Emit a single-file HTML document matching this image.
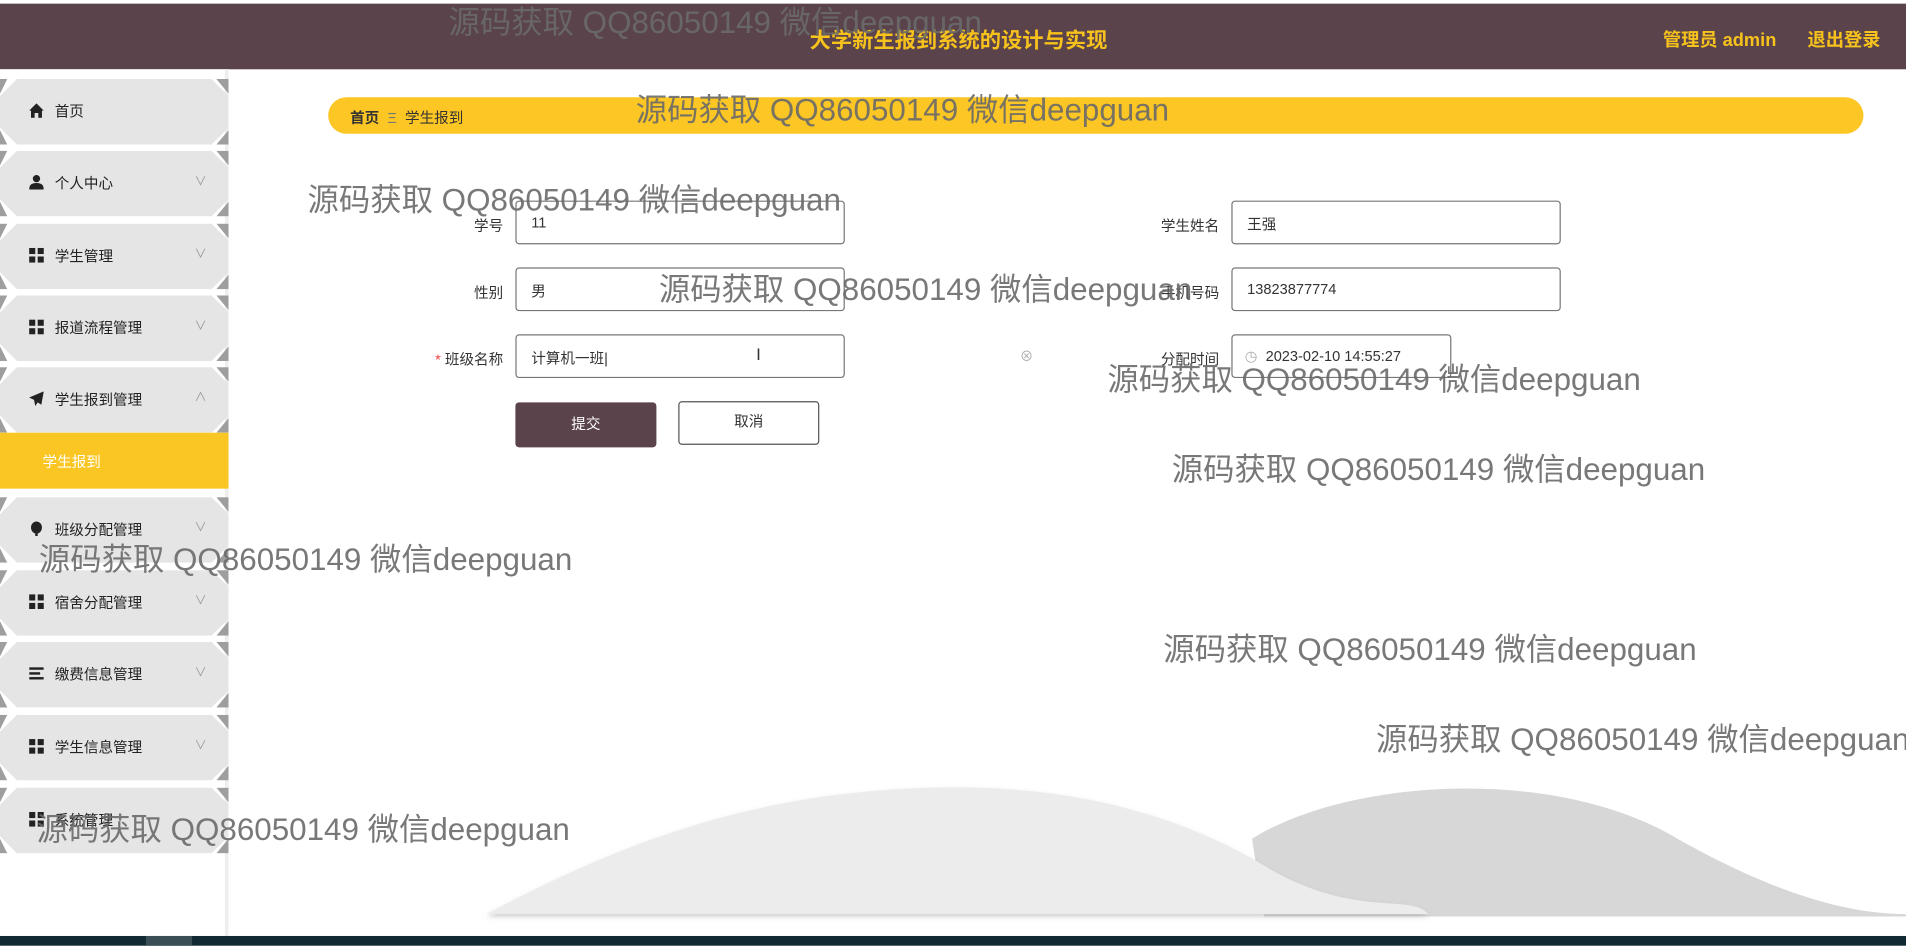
<!DOCTYPE html>
<html><head><meta charset="utf-8"><style>
*{margin:0;padding:0;box-sizing:border-box}
html,body{width:1906px;height:946px;overflow:hidden;background:#fff;font-family:"Liberation Sans","Noto Sans CJK SC",sans-serif}
#w{position:absolute;left:0;top:0;width:1568px;height:778px;transform:scale(1.21556);transform-origin:0 0;background:#fff}
.a{position:absolute}
.hdr{left:0;top:3px;width:1568px;height:54px;background:#5a434b}
.yt{color:#f7c21c;font-weight:bold;font-size:15px}
.side{left:0;top:57px;width:188px;height:713px;background:#fff;border-right:3px solid #eee}
.it{position:absolute;left:0;width:188px;height:54px}
.it .bg{position:absolute;inset:0;background:#9e9e9e;clip-path:polygon(0 0,6px 0,0 12px,0 42px,6px 54px,0 54px, 0 0)}
.it .bg2{position:absolute;inset:0;background:#9e9e9e;clip-path:polygon(178px 0,188px 0,188px 54px,178px 54px,188px 42px,188px 12px)}
.it .hx{position:absolute;inset:0;background:#e5e5e5;clip-path:polygon(14px 0,174px 0,188px 14px,188px 40px,174px 54px,14px 54px,0 40px,0 14px)}
.it .tx{position:absolute;left:45px;top:18px;font-size:12px;color:#222}
.it .ic{position:absolute;left:24px;top:20px;width:12px;height:12px}
.it .cv{position:absolute;left:160px;top:16px;font-size:10px;color:#999}
.wm{position:absolute;font-size:25.8px;color:#6a6a6a;white-space:nowrap;line-height:1;font-family:"Liberation Sans","Noto Sans CJK SC",sans-serif;opacity:.9}
.lb{position:absolute;font-size:12px;color:#333;text-align:right;width:100px}
.in{position:absolute;width:271px;height:36px;border:1.5px solid #777;border-radius:3px;background:#fff;font-size:12px;color:#333;padding:10px 0 0 12px}
.gi{display:grid;grid-template-columns:5px 5px;gap:2px;grid-auto-rows:5px}
.gi i{background:#222;display:block}
</style></head><body><div id="w">
<div class="a hdr"></div>
<div class="a yt" style="left:666px;top:20px;font-size:17.5px">大学新生报到系统的设计与实现</div>
<div class="a yt" style="left:1368px;top:22px">管理员 admin</div>
<div class="a yt" style="left:1487px;top:22px">退出登录</div>

<div class="a side"></div>
<div class="it" style="top:65px"><div class="bg"></div><div class="bg2"></div><div class="hx"></div>
<svg class="ic" viewBox="0 0 12 12"><path d="M6 0L0 6h1.5v6h3V8h3v4h3V6H12z" fill="#222"/></svg><div class="tx">首页</div></div>
<div class="it" style="top:124px"><div class="bg"></div><div class="bg2"></div><div class="hx"></div>
<svg class="ic" viewBox="0 0 12 12"><circle cx="6" cy="3" r="3" fill="#222"/><path d="M0 12c0-4 2-5.5 6-5.5s6 1.5 6 5.5z" fill="#222"/></svg><div class="tx">个人中心</div><div class="cv">∨</div></div>
<div class="it" style="top:184px"><div class="bg"></div><div class="bg2"></div><div class="hx"></div>
<div class="ic gi"><i></i><i></i><i></i><i></i></div><div class="tx">学生管理</div><div class="cv">∨</div></div>
<div class="it" style="top:243px"><div class="bg"></div><div class="bg2"></div><div class="hx"></div>
<div class="ic gi"><i></i><i></i><i></i><i></i></div><div class="tx">报道流程管理</div><div class="cv">∨</div></div>
<div class="it" style="top:302px"><div class="bg"></div><div class="bg2"></div><div class="hx"></div>
<svg class="ic" viewBox="0 0 12 12"><path d="M12 0L0 5l4 2 1 5 2-3 3 2z" fill="#222"/></svg><div class="tx">学生报到管理</div><div class="cv">∧</div></div>
<div class="a" style="left:0;top:356px;width:188px;height:46px;background:#f9c623"></div>
<div class="a" style="left:35px;top:371px;font-size:12px;color:#fff">学生报到</div>
<div class="it" style="top:409px"><div class="bg"></div><div class="bg2"></div><div class="hx"></div>
<svg class="ic" viewBox="0 0 12 12"><ellipse cx="6" cy="5" rx="4.5" ry="5" fill="#222"/><rect x="5" y="9" width="2" height="3" fill="#222"/></svg><div class="tx">班级分配管理</div><div class="cv">∨</div></div>
<div class="it" style="top:469px"><div class="bg"></div><div class="bg2"></div><div class="hx"></div>
<div class="ic gi"><i></i><i></i><i></i><i></i></div><div class="tx">宿舍分配管理</div><div class="cv">∨</div></div>
<div class="it" style="top:528px"><div class="bg"></div><div class="bg2"></div><div class="hx"></div>
<svg class="ic" viewBox="0 0 12 12"><rect y="1" width="12" height="2" fill="#222"/><rect y="5" width="9" height="2" fill="#222"/><rect y="9" width="12" height="2" fill="#222"/></svg><div class="tx">缴费信息管理</div><div class="cv">∨</div></div>
<div class="it" style="top:588px"><div class="bg"></div><div class="bg2"></div><div class="hx"></div>
<div class="ic gi"><i></i><i></i><i></i><i></i></div><div class="tx">学生信息管理</div><div class="cv">∨</div></div>
<div class="it" style="top:648px"><div class="bg"></div><div class="bg2"></div><div class="hx"></div>
<div class="ic gi"><i></i><i></i><i></i><i></i></div><div class="tx">系统管理</div></div>

<div class="a" style="left:270px;top:80px;width:1263px;height:30px;background:#fcc624;border-radius:15px"></div>
<div class="a" style="left:288px;top:88px;font-size:12px;color:#333"><b>首页</b>&nbsp;&nbsp;<span style="color:#777">Ξ</span>&nbsp;&nbsp;学生报到</div>

<div class="lb" style="left:314px;top:177px">学号</div>
<div class="in" style="left:424px;top:165px">11</div>
<div class="lb" style="left:314px;top:232px">性别</div>
<div class="in" style="left:424px;top:220px">男</div>
<div class="lb" style="left:314px;top:287px"><span style="color:#e44">*</span> 班级名称</div>
<div class="in" style="left:424px;top:275px">计算机一班|</div>
<div class="a" style="left:622px;top:283px;font-size:14px;color:#333">I</div>
<div class="a" style="left:839px;top:285px;font-size:11px;color:#aaa">⊗</div>
<div class="lb" style="left:903px;top:177px">学生姓名</div>
<div class="in" style="left:1013px;top:165px">王强</div>
<div class="lb" style="left:903px;top:232px">手机号码</div>
<div class="in" style="left:1013px;top:220px">13823877774</div>
<div class="lb" style="left:903px;top:287px">分配时间</div>
<div class="in" style="left:1013px;top:275px;width:181px;padding-left:10px"><span style="color:#aaa">◷</span>&nbsp; 2023-02-10 14:55:27</div>
<div class="a" style="left:424px;top:331px;width:116px;height:37px;background:#5a434b;border-radius:3px;color:#fff;font-size:12px;text-align:center;line-height:37px">提交</div>
<div class="a" style="left:558px;top:330px;width:116px;height:36px;border:1.5px solid #555;border-radius:3px;color:#333;font-size:12px;text-align:center;line-height:33px">取消</div>

<svg class="a" style="left:190px;top:630px" width="1378" height="140" viewBox="190 630 1378 140">
<defs><filter id="s"><feDropShadow dx="0" dy="2" stdDeviation="2" flood-color="#999" flood-opacity=".5"/></filter></defs>
<path d="M1030 690C1110 640 1280 630 1380 690C1460 735 1520 752 1568 752L1568 754L1040 754Z" fill="#d7d7d7"/>
<path d="M400 752C500 700 620 645 800 648C900 650 980 675 1050 718C1120 755 1160 735 1175 752Z" fill="#ececec" filter="url(#s)"/>
</svg>
<div class="a" style="left:0;top:770px;width:1568px;height:8px;background:#0f2a32"></div>
<div class="a" style="left:120px;top:770px;width:38px;height:8px;background:#3a4e56"></div>

<div class="wm" style="left:369px;top:7px">源码获取 QQ86050149 微信deepguan</div>
<div class="wm" style="left:523px;top:79px">源码获取 QQ86050149 微信deepguan</div>
<div class="wm" style="left:253px;top:153px">源码获取 QQ86050149 微信deepguan</div>
<div class="wm" style="left:542px;top:227px">源码获取 QQ86050149 微信deepguan</div>
<div class="wm" style="left:911px;top:301px">源码获取 QQ86050149 微信deepguan</div>
<div class="wm" style="left:964px;top:375px">源码获取 QQ86050149 微信deepguan</div>
<div class="wm" style="left:32px;top:449px">源码获取 QQ86050149 微信deepguan</div>
<div class="wm" style="left:957px;top:523px">源码获取 QQ86050149 微信deepguan</div>
<div class="wm" style="left:1132px;top:597px">源码获取 QQ86050149 微信deepguan</div>
<div class="wm" style="left:30px;top:671px">源码获取 QQ86050149 微信deepguan</div>
</div></body></html>
